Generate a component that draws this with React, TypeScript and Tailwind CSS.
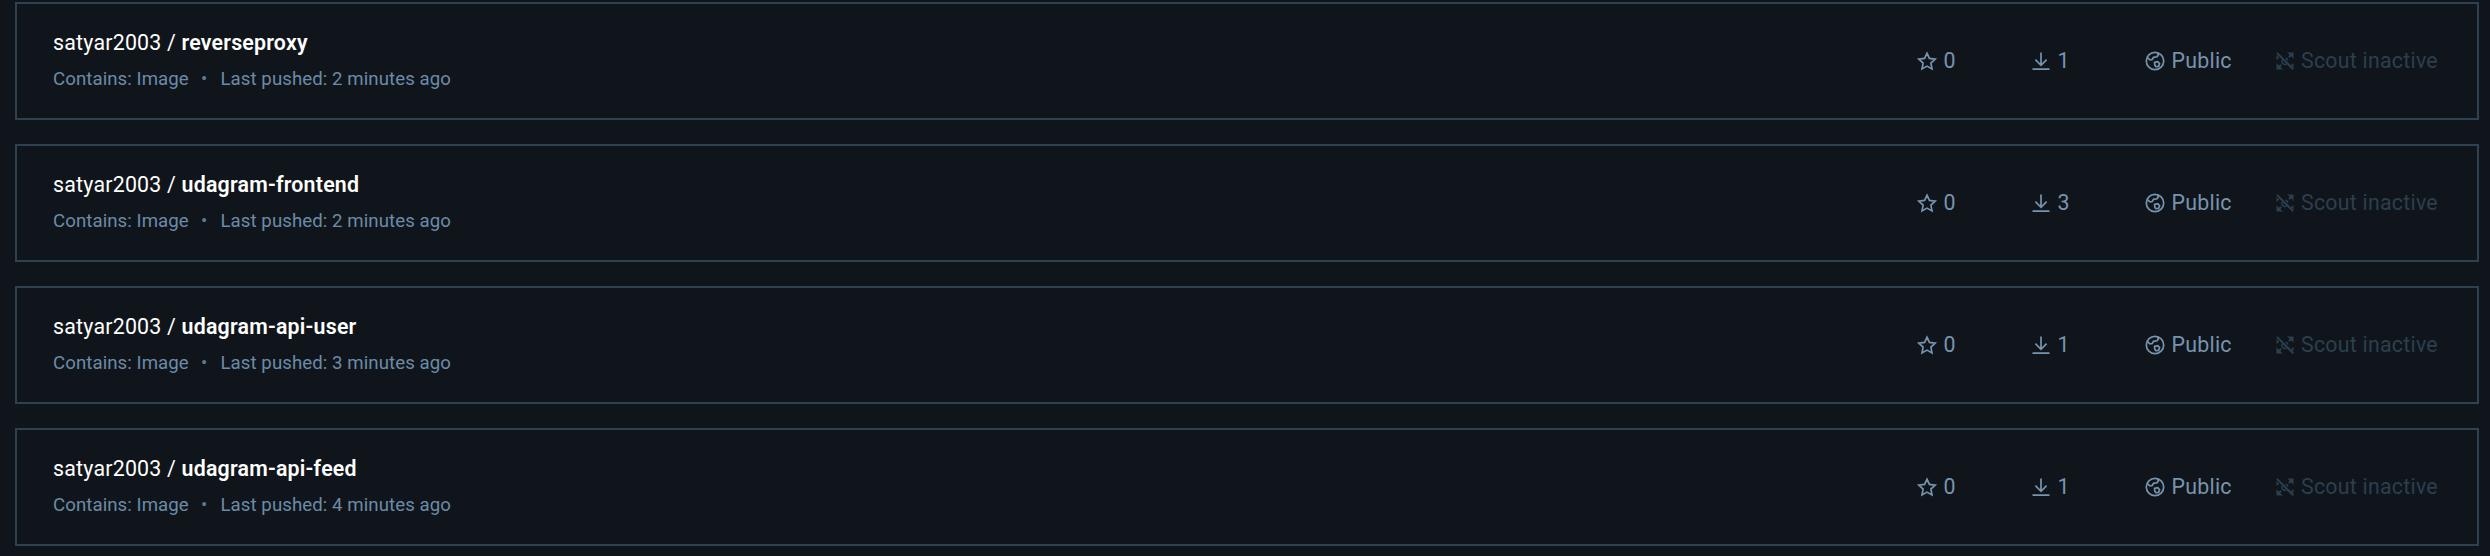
import React from "react";

type Repo = { name: string; minutes: number; pulls: number };

const repos: Repo[] = [
  { name: "reverseproxy", minutes: 2, pulls: 1 },
  { name: "udagram-frontend", minutes: 2, pulls: 3 },
  { name: "udagram-api-user", minutes: 3, pulls: 1 },
  { name: "udagram-api-feed", minutes: 4, pulls: 1 },
];

const StarIcon = () => (
  <svg className="size-6 shrink-0" viewBox="0 0 24 24" fill="none" stroke="currentColor" strokeWidth="1.7">
    <path d="M12 4.2l2.4 5.2 5.8.7-4.3 4 1.1 5.8-5-2.8-5 2.8 1.1-5.8-4.3-4 5.8-.7z" />
  </svg>
);

const DownloadIcon = () => (
  <svg className="size-6 shrink-0" viewBox="0 0 24 24" fill="none" stroke="currentColor" strokeWidth="1.7">
    <path d="M12 3.5v13M6.4 10.7l5.6 5.6 5.6-5.6M3.5 20.2h17" />
  </svg>
);

const GlobeIcon = () => (
  <svg className="size-6 shrink-0" viewBox="0 0 24 24" fill="none" stroke="currentColor" strokeWidth="1.7">
    <circle cx="12" cy="12" r="8.7" />
    <path d="M4.4 8.6l2.6 2.2 2.2-.3 1.3-2.2 3.5-.5 1.3-1.8-.7-2.2M11.6 13.4l3.2-.7 1.8 2-1 2.7-2.7.3-1.2-1.8z" />
  </svg>
);

const ScoutIcon = () => (
  <svg className="size-6 shrink-0" viewBox="0 0 24 24" fill="currentColor">
    <path d="M14 3.5h6.5V10l-2-2.5-2.2 1.2-1-1 1.2-2.2zM3.5 14l2 2.5 2.2-1.2 1 1-1.2 2.2 2.5 2H3.5zM3.5 6v5l2.8-2.2zM20.5 14v4.5l-2.6-2.6z" />
    <path fill="none" stroke="currentColor" strokeWidth="2" d="M3.9 3.9l16.4 16.4" />
    <path fill="none" stroke="currentColor" strokeWidth="1.4" d="M9.2 10.8a3.3 3.3 0 0 0 4.3 4.4M12.6 9.2a3.1 3.1 0 0 1 2.3 2.3" />
  </svg>
);

const RepoCard = ({ name, minutes, pulls }: Repo) => (
  <article className="flex h-[118px] items-start justify-between border-2 border-[#2e4150] pr-[37px] pl-9">
    <div className="pt-6">
      <h2 className="text-[21.333px] leading-[30px] tracking-[0.22px] whitespace-pre text-white">
        satyar2003 / <span className="font-semibold">{name}</span>
      </h2>
      <p className="mt-2 flex text-[18.667px] leading-[26px] tracking-[0.06px] text-[#6b8ba8]">
        <span className="w-[148px]">Contains: Image</span>
        <span className="w-[19.5px] text-[#5b7b96]">•</span>
        <span>Last pushed: {minutes} minutes ago</span>
      </p>
    </div>
    <div className="flex pt-[42px] text-[21.333px] leading-[30px] tracking-[0.25px] text-[#7794ae]">
      <div className="flex w-[114px] items-center gap-[4.5px]">
        <StarIcon />
        <span>0</span>
      </div>
      <div className="flex w-[114px] items-center gap-[4.5px]">
        <DownloadIcon />
        <span>{pulls}</span>
      </div>
      <div className="flex w-[130px] items-center gap-[4.5px]">
        <GlobeIcon />
        <span>Public</span>
      </div>
      <div className="flex w-[167px] items-center gap-[4px] whitespace-nowrap text-[#2b3f4e]">
        <ScoutIcon />
        <span>Scout inactive</span>
      </div>
    </div>
  </article>
);

export default function App() {
  return (
    <main className="flex h-[556px] flex-col gap-6 overflow-hidden bg-[#10151b] pt-[2px] pr-[11px] pl-[15px] font-['Roboto',sans-serif]">
      {repos.map((repo) => (
        <RepoCard key={repo.name} {...repo} />
      ))}
    </main>
  );
}
